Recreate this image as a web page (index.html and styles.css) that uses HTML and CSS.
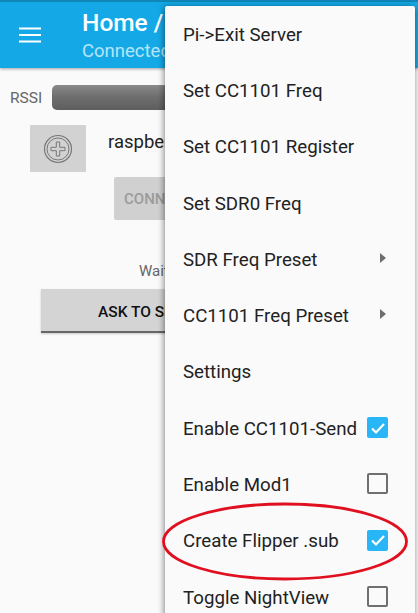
FILE: index.html
```html
<!DOCTYPE html>
<html lang="en">
<head>
<meta charset="utf-8">
<title>Home</title>
<link rel="stylesheet" href="styles.css">
</head>
<body>
<div class="app">
  <header class="appbar">
    <svg class="burger" width="24" height="18" viewBox="0 0 24 18"><path d="M1 2.500h22M1 9h22M1 15.500h22" stroke="#fff" stroke-width="2.200" fill="none"/></svg>
    <div class="titles">
      <div class="title">Home /</div>
      <div class="subtitle">Connected</div>
    </div>
  </header>
  <main class="content">
    <div class="rssi-row">
      <span class="rssi-label">RSSI</span>
      <div class="rssi-bar"></div>
    </div>
    <div class="device-row">
      <div class="device-icon">
        <svg width="30" height="30" viewBox="0 0 30 30" fill="none" stroke="#777"><circle cx="15" cy="15" r="13.500" stroke-width="1.200"/><circle cx="15" cy="15" r="11" stroke-width="1"/><path d="M13.300 8h3.400v5.300H22v3.400h-5.300V22h-3.400v-5.300H8v-3.400h5.300z" stroke-width="1"/></svg>
      </div>
      <div class="device-name">raspberrypi</div>
    </div>
    <div class="connect-row"><button class="connect">CONNECT</button></div>
    <div class="wait">Waiting</div>
    <button class="ask">ASK TO SEND</button>
  </main>

  <nav class="menu">
    <div class="item">Pi-&gt;Exit Server</div>
    <div class="item">Set CC1101 Freq</div>
    <div class="item">Set CC1101 Register</div>
    <div class="item">Set SDR0 Freq</div>
    <div class="item">SDR Freq Preset<span class="arrow"></span></div>
    <div class="item">CC1101 Freq Preset<span class="arrow"></span></div>
    <div class="item">Settings</div>
    <div class="item">Enable CC1101-Send<span class="check on"><svg width="22" height="22" viewBox="0 0 22 22"><path d="M5 11.500l4 4 8-8.500" fill="none" stroke="#fff" stroke-width="2.200"/></svg></span></div>
    <div class="item">Enable Mod1<span class="check"></span></div>
    <div class="item">Create Flipper .sub<span class="check on"><svg width="22" height="22" viewBox="0 0 22 22"><path d="M5 11.500l4 4 8-8.500" fill="none" stroke="#fff" stroke-width="2.200"/></svg></span></div>
    <div class="item">Toggle NightView<span class="check"></span></div>
  </nav>

  <svg class="circle" width="418" height="613" viewBox="0 0 418 613">
    <ellipse cx="285" cy="541.500" rx="121.500" ry="37.500" fill="none" stroke="#e01020" stroke-width="2.800"/>
  </svg>
</div>
</body>
</html>
```
FILE: styles.css
```css
* { box-sizing: border-box; }
html, body { margin: 0; padding: 0; }
body { font-family: Roboto, "Liberation Sans", sans-serif; background: #fafafa; }
.app { position: relative; width: 418px; height: 613px; overflow: hidden; background: #fafafa; }

.appbar {
  height: 68px;
  background: #14a9e6;
  border-top: 2px solid #0f86b8;
  display: flex;
  align-items: center;
  padding-left: 18px;
  gap: 40px;
  box-shadow: 0 1px 3px rgba(0,0,0,.35);
  white-space: nowrap;
}
.burger { flex: none; margin-top: -1px; }
.title { color: #fff; font-size: 24.500px; font-weight: 500; line-height: 28px; }
.subtitle { color: #b5e5f8; font-size: 18.500px; line-height: 22px; margin-top: 3px; }

.content { padding: 17px 0 0; }
.rssi-row { display: flex; align-items: center; padding-left: 10px; gap: 9px; }
.rssi-label { color: #666; font-size: 15.500px; width: 33px; white-space: nowrap; }
.rssi-bar {
  width: 300px; height: 25px; border-radius: 5px;
  background: linear-gradient(#8a8a8a, #6f6f6f 45%, #5e5e5e);
}
.device-row { display: flex; padding: 15px 0 0 30px; gap: 22px; }
.device-icon {
  width: 56px; height: 47px; background: #d2d2d2; border-radius: 1px;
  display: flex; align-items: center; justify-content: center;
}
.device-name { color: #222; font-size: 18.500px; line-height: 24px; margin-top: 5px; }
.connect-row { padding: 5px 0 0 114px; }
.connect {
  width: 130px; height: 43px; border: 0; border-radius: 2px; background: #d0d0d0;
  color: #9b9b9b; font: 500 15px Roboto, sans-serif; text-align: left; padding-left: 10px;
}
.wait { padding: 41px 0 0 139px; color: #666; font-size: 15px; line-height: 20px; white-space: nowrap; }
.ask {
  display: block; margin: 8px 0 0 41px; width: 336px; height: 44px;
  border: 0; border-bottom: 2px solid #666; background: #d4d4d4;
  box-shadow: 0 1px 2px rgba(0,0,0,.2);
  color: #111; font: 500 15.500px Roboto, sans-serif; text-align: left; padding: 3px 0 0 57px;
}

.menu {
  position: absolute; left: 165px; top: 6px; width: 250px; height: 620px;
  background: #fafafa; border-radius: 2px;
  box-shadow: 0 2px 6px rgba(0,0,0,.35), -2px 0 6px rgba(0,0,0,.18);
}
.item {
  height: 56.300px; display: flex; align-items: center; justify-content: space-between;
  padding: 1px 27px 0 18px; color: #222; font-size: 18.700px; white-space: nowrap; position: relative;
}
.arrow {
  position: absolute; left: 215px; top: 22px;
  border-left: 6px solid #6e6e6e; border-top: 5.500px solid transparent; border-bottom: 5.500px solid transparent;
}
.check {
  position: absolute; left: 202px; top: 17px;
  width: 21px; height: 21px; border: 2px solid #6f6f6f; border-radius: 2px;
  display: flex; align-items: center; justify-content: center;
}
.check.on { background: #29b6f6; border-color: #29b6f6; }
.check svg { flex: none; }
.circle { position: absolute; left: 0; top: 0; pointer-events: none; }
```
